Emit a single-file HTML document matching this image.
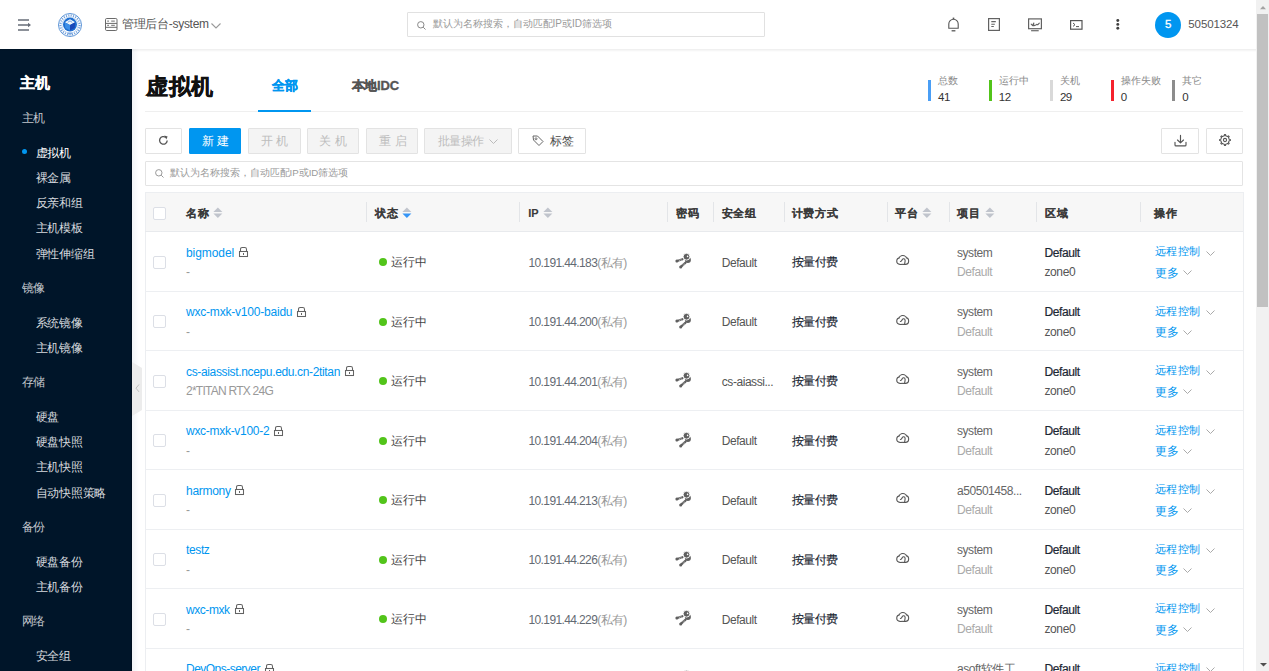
<!DOCTYPE html><html><head><meta charset="utf-8"><style>
*{box-sizing:border-box}
html,body{margin:0;padding:0}
body{width:1269px;height:671px;overflow:hidden;position:relative;background:#fff;font-family:"Liberation Sans",sans-serif}
.t{position:absolute;white-space:nowrap}
.a{position:absolute}
svg{position:absolute;overflow:visible}
.btn{position:absolute;top:128px;height:26px;border:1px solid #e3e3e3;border-radius:1px;background:#f4f4f4}
.cb{position:absolute;width:13px;height:13px;border:1px solid #dcdfe6;border-radius:2px;background:#fff}
.vl{position:absolute;top:202px;width:1px;height:20px;background:#e3e5e8}
.hl{position:absolute;left:145px;width:1098px;height:1px;background:#edeff2}
</style></head><body>
<div class="a" style="left:0;top:0;width:1256px;height:49px;background:#fff"></div>
<svg style="left:18px;top:19px" width="14" height="13" viewBox="0 0 14 13"><g stroke="#676d78" stroke-width="1.6" fill="none"><path d="M0 1h11M0 6h11M0 11h11"/></g><path d="M10 3.8l3 2.2-3 2.2z" fill="#676d78"/></svg>
<svg style="left:58px;top:13px" width="24" height="24" viewBox="0 0 24 24">
<circle cx="12" cy="12" r="11.5" fill="#fff" stroke="#5f97d8" stroke-width="1"/>
<circle cx="12" cy="12" r="9.6" fill="none" stroke="#4a86d2" stroke-width="2" stroke-dasharray="1.1 1.3" opacity="0.8"/>
<circle cx="12" cy="12" r="8.1" fill="#fff" stroke="#9cc0ea" stroke-width="0.6"/>
<circle cx="12" cy="11.6" r="7" fill="#1f6fd0"/>
<path d="M12 6.3L17.2 9.2 12 12.1 6.8 9.2z" fill="#f2f7fd"/>
<path d="M6.8 9.2L12 12.1V17.6L7.3 15z" fill="#3d8fe8"/>
<path d="M17.2 9.2L12 12.1V17.6L16.7 15z" fill="#1b48b8"/>
<path d="M9.8 9.3L12 7.9 14.2 9.3" fill="none" stroke="#4a86d4" stroke-width="0.7"/>
<rect x="9.6" y="19.6" width="4.8" height="1.6" fill="#5a90d6" opacity="0.7"/>
</svg>
<svg style="left:105px;top:18px" width="13" height="13" viewBox="0 0 13 13"><g fill="none" stroke="#6a6a6a" stroke-width="1"><rect x="0.5" y="0.5" width="11.5" height="12" rx="1.2"/><path d="M0.5 5.4h11.5M0.5 9.3h11.5"/></g><g stroke="#8a8a8a" stroke-width="1.1"><path d="M2.2 3.1h1.8M6.2 3.1h3.6M2.2 7.4h1.8M6.2 7.4h3.6"/></g></svg>
<div class="t" style="left:122px;top:18.44px;font-size:12px;line-height:12px;color:#555;font-weight:normal;letter-spacing:-0.3px">管理后台-system</div>
<svg style="left:211px;top:22.5px" width="10" height="6" viewBox="0 0 10 6"><path d="M0.5 0.5l4.5 4.5 4.5-4.5" fill="none" stroke="#9a9a9a" stroke-width="1.1"/></svg>
<div class="a" style="left:407px;top:12px;width:358px;height:25px;border:1px solid #e1e1e1;border-radius:1px"></div>
<svg style="left:417px;top:21px" width="9" height="9" viewBox="0 0 9 9"><circle cx="3.8" cy="3.8" r="3.2" fill="none" stroke="#888" stroke-width="1"/><path d="M6.2 6.2l2.3 2.3" stroke="#888" stroke-width="1"/></svg>
<div class="t" style="left:432.5px;top:19.34px;font-size:10px;line-height:10px;color:#999;font-weight:normal;">默认为名称搜索，自动匹配IP或ID筛选项</div>
<svg style="left:947.5px;top:16.5px" width="11" height="15" viewBox="0 0 11 15"><g fill="none" stroke="#555" stroke-width="1.1"><path d="M0.8 11.3h9.4V7a4.7 4.7 0 0 0-9.4 0z"/></g><rect x="4.7" y="0.6" width="1.6" height="1.6" fill="#555"/><path d="M3.6 13.8h3.8" stroke="#555" stroke-width="1.3"/></svg>
<svg style="left:988px;top:18px" width="13" height="13" viewBox="0 0 13 13"><rect x="0.6" y="0.6" width="10.8" height="11.8" fill="none" stroke="#626262" stroke-width="1.2"/><path d="M3.3 3.6h4.5M3.3 6.2h3.5M3.3 8.5h2.5" stroke="#626262" stroke-width="1.05"/></svg>
<svg style="left:1028px;top:18px" width="15" height="14" viewBox="0 0 15 14"><rect x="0.6" y="0.9" width="12.8" height="9.8" fill="none" stroke="#626262" stroke-width="1.2"/><path d="M3.2 6.2l1.4 1.4 1.2-2.6-0.3 2.8 1.6-0.4 1.6-1 1.2 0.3 1.4-1.6" fill="none" stroke="#626262" stroke-width="1.1" stroke-linejoin="round" stroke-linecap="round"/><path d="M3.1 12.7h7.6" stroke="#6a6a6a" stroke-width="1.2"/></svg>
<svg style="left:1070px;top:20px" width="13" height="10" viewBox="0 0 13 10"><rect x="0.6" y="0.6" width="11.4" height="8.6" fill="none" stroke="#555" stroke-width="1.2"/><path d="M3 3l2 1.7-2 1.7" fill="none" stroke="#555" stroke-width="1"/><path d="M6 6.6h3" stroke="#555" stroke-width="1"/></svg>
<svg style="left:1116px;top:19px" width="4" height="11" viewBox="0 0 4 11"><g fill="#3f3f3f"><circle cx="1.8" cy="1.5" r="1.45"/><circle cx="1.8" cy="5.4" r="1.45"/><circle cx="1.8" cy="9.3" r="1.45"/></g></svg>
<div class="a" style="left:1154.5px;top:11.7px;width:26.5px;height:26.5px;border-radius:50%;background:#0096f0"></div>
<div class="t" style="left:1165px;top:18.87px;font-size:11.5px;line-height:11.5px;color:#fff;font-weight:normal;-webkit-text-stroke:0.3px #fff">5</div>
<div class="t" style="left:1188.3px;top:18.57px;font-size:11.5px;line-height:11.5px;color:#555;font-weight:normal;letter-spacing:-0.1px">50501324</div>
<div class="a" style="left:0;top:49px;width:132px;height:622px;background:#001529"></div>
<div class="a" style="left:131px;top:49px;width:1px;height:622px;background:#000f20"></div>
<div class="a" style="left:132px;top:49px;width:7px;height:622px;background:linear-gradient(to right,rgba(20,60,110,0.06),rgba(20,60,110,0))"></div>
<div class="t" style="left:19.5px;top:75.10px;font-size:15px;line-height:15px;color:#fff;font-weight:bold;letter-spacing:0.8px;-webkit-text-stroke:0.3px #fff">主机</div>
<div class="t" style="left:21.8px;top:111.74px;font-size:12px;line-height:12px;color:#c3c7cd;font-weight:normal;letter-spacing:-0.4px">主机</div>
<div class="t" style="left:35.5px;top:146.54px;font-size:12px;line-height:12px;color:#fff;font-weight:normal;letter-spacing:-0.25px">虚拟机</div>
<div class="a" style="left:21.8px;top:148.6px;width:5px;height:5px;border-radius:50%;background:#0096f0"></div>
<div class="t" style="left:35.5px;top:171.84px;font-size:12px;line-height:12px;color:#d6d9de;font-weight:normal;letter-spacing:-0.25px">裸金属</div>
<div class="t" style="left:35.5px;top:197.14px;font-size:12px;line-height:12px;color:#d6d9de;font-weight:normal;letter-spacing:-0.25px">反亲和组</div>
<div class="t" style="left:35.5px;top:222.44px;font-size:12px;line-height:12px;color:#d6d9de;font-weight:normal;letter-spacing:-0.25px">主机模板</div>
<div class="t" style="left:35.5px;top:247.74px;font-size:12px;line-height:12px;color:#d6d9de;font-weight:normal;letter-spacing:-0.25px">弹性伸缩组</div>
<div class="t" style="left:21.8px;top:282.04px;font-size:12px;line-height:12px;color:#c3c7cd;font-weight:normal;letter-spacing:-0.4px">镜像</div>
<div class="t" style="left:35.5px;top:316.84px;font-size:12px;line-height:12px;color:#d6d9de;font-weight:normal;letter-spacing:-0.25px">系统镜像</div>
<div class="t" style="left:35.5px;top:342.14px;font-size:12px;line-height:12px;color:#d6d9de;font-weight:normal;letter-spacing:-0.25px">主机镜像</div>
<div class="t" style="left:21.8px;top:375.94px;font-size:12px;line-height:12px;color:#c3c7cd;font-weight:normal;letter-spacing:-0.4px">存储</div>
<div class="t" style="left:35.5px;top:410.74px;font-size:12px;line-height:12px;color:#d6d9de;font-weight:normal;letter-spacing:-0.25px">硬盘</div>
<div class="t" style="left:35.5px;top:436.04px;font-size:12px;line-height:12px;color:#d6d9de;font-weight:normal;letter-spacing:-0.25px">硬盘快照</div>
<div class="t" style="left:35.5px;top:461.34px;font-size:12px;line-height:12px;color:#d6d9de;font-weight:normal;letter-spacing:-0.25px">主机快照</div>
<div class="t" style="left:35.5px;top:486.64px;font-size:12px;line-height:12px;color:#d6d9de;font-weight:normal;letter-spacing:-0.25px">自动快照策略</div>
<div class="t" style="left:21.8px;top:520.94px;font-size:12px;line-height:12px;color:#c3c7cd;font-weight:normal;letter-spacing:-0.4px">备份</div>
<div class="t" style="left:35.5px;top:555.74px;font-size:12px;line-height:12px;color:#d6d9de;font-weight:normal;letter-spacing:-0.25px">硬盘备份</div>
<div class="t" style="left:35.5px;top:581.04px;font-size:12px;line-height:12px;color:#d6d9de;font-weight:normal;letter-spacing:-0.25px">主机备份</div>
<div class="t" style="left:21.8px;top:614.94px;font-size:12px;line-height:12px;color:#c3c7cd;font-weight:normal;letter-spacing:-0.4px">网络</div>
<div class="t" style="left:35.5px;top:649.74px;font-size:12px;line-height:12px;color:#d6d9de;font-weight:normal;letter-spacing:-0.25px">安全组</div>
<svg style="left:132px;top:362px" width="11" height="54" viewBox="0 0 11 54"><path d="M0 0L10 6V48L0 54z" fill="#ececec"/><path d="M7 22.5l-3 3.7 3 3.7" fill="none" stroke="#b9b9b9" stroke-width="0.9"/></svg>
<div class="a" style="left:0;top:49px;width:1256px;height:3px;background:linear-gradient(to bottom,rgba(0,0,0,0.07),rgba(0,0,0,0))"></div>
<div class="t" style="left:146px;top:75.58px;font-size:22px;line-height:22px;color:#111;font-weight:bold;letter-spacing:0.5px;-webkit-text-stroke:0.5px #111">虚拟机</div>
<div class="t" style="left:272px;top:79.20px;font-size:13px;line-height:13px;color:#0096f0;font-weight:bold;-webkit-text-stroke:0.35px #0096f0">全部</div>
<div class="t" style="left:351.5px;top:79.20px;font-size:13px;line-height:13px;color:#555;font-weight:bold;letter-spacing:-0.2px;-webkit-text-stroke:0.35px #555">本地IDC</div>
<div class="a" style="left:145px;top:111px;width:1098px;height:1px;background:#efefef"></div>
<div class="a" style="left:258px;top:109.5px;width:53px;height:2px;background:#0096f0"></div>
<div class="a" style="left:928.3px;top:80px;width:2.7px;height:21.4px;background:#4a9ef5"></div>
<div class="t" style="left:938.0px;top:75.94px;font-size:10px;line-height:10px;color:#8a8a8a;font-weight:normal;">总数</div>
<div class="t" style="left:938.0999999999999px;top:91.57px;font-size:11.5px;line-height:11.5px;color:#333;font-weight:normal;letter-spacing:-0.55px">41</div>
<div class="a" style="left:989px;top:80px;width:2.7px;height:21.4px;background:#52c41a"></div>
<div class="t" style="left:998.7px;top:75.94px;font-size:10px;line-height:10px;color:#8a8a8a;font-weight:normal;">运行中</div>
<div class="t" style="left:998.8px;top:91.57px;font-size:11.5px;line-height:11.5px;color:#333;font-weight:normal;letter-spacing:-0.55px">12</div>
<div class="a" style="left:1050.2px;top:80px;width:2.7px;height:21.4px;background:#d9d9d9"></div>
<div class="t" style="left:1059.9px;top:75.94px;font-size:10px;line-height:10px;color:#8a8a8a;font-weight:normal;">关机</div>
<div class="t" style="left:1060.0px;top:91.57px;font-size:11.5px;line-height:11.5px;color:#333;font-weight:normal;letter-spacing:-0.55px">29</div>
<div class="a" style="left:1111px;top:80px;width:2.7px;height:21.4px;background:#f5222d"></div>
<div class="t" style="left:1120.7px;top:75.94px;font-size:10px;line-height:10px;color:#8a8a8a;font-weight:normal;">操作失败</div>
<div class="t" style="left:1120.8px;top:91.57px;font-size:11.5px;line-height:11.5px;color:#333;font-weight:normal;letter-spacing:-0.55px">0</div>
<div class="a" style="left:1172.4px;top:80px;width:2.7px;height:21.4px;background:#8c8c8c"></div>
<div class="t" style="left:1182.1000000000001px;top:75.94px;font-size:10px;line-height:10px;color:#8a8a8a;font-weight:normal;">其它</div>
<div class="t" style="left:1182.2px;top:91.57px;font-size:11.5px;line-height:11.5px;color:#333;font-weight:normal;letter-spacing:-0.55px">0</div>
<div class="btn" style="left:145px;width:37px;background:#fff"></div>
<svg style="left:158px;top:135px" width="11" height="11" viewBox="0 0 11 11"><path d="M9.2 5.5A3.8 3.8 0 1 1 7.8 2.4" fill="none" stroke="#555" stroke-width="1.3"/><path d="M6.3 0.6L9.6 1.4 8.3 4.4z" fill="#555"/></svg>
<div class="btn" style="left:189px;width:52px;background:#0096f0;border-color:#0096f0"></div>
<div class="t" style="left:201.5px;top:135.34px;font-size:12px;line-height:12px;color:#fff;font-weight:normal;letter-spacing:3.6px">新建</div>
<div class="btn" style="left:247.5px;width:53px"></div>
<div class="t" style="left:260.5px;top:135.34px;font-size:12px;line-height:12px;color:#bdbdbd;font-weight:normal;letter-spacing:3.6px">开机</div>
<div class="btn" style="left:307px;width:52px"></div>
<div class="t" style="left:319px;top:135.34px;font-size:12px;line-height:12px;color:#bdbdbd;font-weight:normal;letter-spacing:3.6px">关机</div>
<div class="btn" style="left:366px;width:52px"></div>
<div class="t" style="left:379px;top:135.34px;font-size:12px;line-height:12px;color:#bdbdbd;font-weight:normal;letter-spacing:3.6px">重启</div>
<div class="btn" style="left:424.3px;width:87.5px"></div>
<div class="t" style="left:438px;top:135.34px;font-size:12px;line-height:12px;color:#bdbdbd;font-weight:normal;letter-spacing:-0.6px">批量操作</div>
<svg style="left:489px;top:138.5px" width="9" height="5" viewBox="0 0 9 5"><path d="M0.5 0.5l4 4 4-4" fill="none" stroke="#bbb" stroke-width="1"/></svg>
<div class="btn" style="left:518.2px;width:67.5px;background:#fff"></div>
<svg style="left:532px;top:135px" width="12" height="11" viewBox="0 0 12 11"><path d="M1 1h4.5l5.5 5.5-4 4L1.5 5z" fill="none" stroke="#666" stroke-width="1" stroke-linejoin="round"/><circle cx="4" cy="3.8" r="1" fill="none" stroke="#666" stroke-width="0.9"/></svg>
<div class="t" style="left:549.5px;top:135.34px;font-size:12px;line-height:12px;color:#4a4a4a;font-weight:normal;letter-spacing:0.5px">标签</div>
<div class="btn" style="left:1161px;width:38px;background:#fff"></div>
<svg style="left:1174px;top:134.5px" width="12" height="12" viewBox="0 0 12 12"><g fill="none" stroke="#555" stroke-width="1.15" stroke-linejoin="round" stroke-linecap="round"><path d="M6.5 0.4v7.3M3.5 5L6.5 7.8 9.5 5"/><path d="M1 7.3v2.6a1 1 0 0 0 1 1h9a1 1 0 0 0 1-1V7.3"/></g></svg>
<div class="btn" style="left:1205.5px;width:37.5px;background:#fff"></div>
<svg style="left:1218.5px;top:134.3px" width="12" height="12" viewBox="0 0 12 12"><path d="M9.97 4.64 L10.15 5.34 L11.37 5.41 L11.37 6.59 L10.15 6.66 L9.97 7.36 L9.77 7.85 L9.40 8.47 L10.21 9.38 L9.38 10.21 L8.47 9.40 L7.85 9.77 L7.36 9.97 L6.66 10.15 L6.59 11.37 L5.41 11.37 L5.34 10.15 L4.64 9.97 L4.15 9.77 L3.53 9.40 L2.62 10.21 L1.79 9.38 L2.60 8.47 L2.23 7.85 L2.03 7.36 L1.85 6.66 L0.63 6.59 L0.63 5.41 L1.85 5.34 L2.03 4.64 L2.23 4.15 L2.60 3.53 L1.79 2.62 L2.62 1.79 L3.53 2.60 L4.15 2.23 L4.64 2.03 L5.34 1.85 L5.41 0.63 L6.59 0.63 L6.66 1.85 L7.36 2.03 L7.85 2.23 L8.47 2.60 L9.38 1.79 L10.21 2.62 L9.40 3.53 L9.77 4.15z" fill="none" stroke="#555" stroke-width="1.05" stroke-linejoin="round"/><circle cx="6" cy="6" r="1.6" fill="none" stroke="#555" stroke-width="1.1"/></svg>
<div class="a" style="left:145px;top:161px;width:1098px;height:24.5px;border:1px solid #e4e4e4;border-radius:1px"></div>
<svg style="left:154.5px;top:169px" width="9" height="9" viewBox="0 0 9 9"><circle cx="3.8" cy="3.8" r="3.2" fill="none" stroke="#999" stroke-width="1"/><path d="M6.2 6.2l2.3 2.3" stroke="#999" stroke-width="1"/></svg>
<div class="t" style="left:169.5px;top:168.29px;font-size:9.7px;line-height:9.7px;color:#9a9a9a;font-weight:normal;">默认为名称搜索，自动匹配IP或ID筛选项</div>
<div class="a" style="left:144.5px;top:192px;width:1099px;height:479px;border:1px solid #eceef1;border-bottom:none"></div>
<div class="a" style="left:145.5px;top:193px;width:1097px;height:38px;background:#f7f7f7"></div>
<div class="a" style="left:145px;top:231px;width:1098px;height:1px;background:#e8eaed"></div>
<div class="cb" style="left:153px;top:207px"></div>
<div class="t" style="left:186.3px;top:208.29px;font-size:11px;line-height:11px;color:#3a3a3a;font-weight:bold;letter-spacing:0.55px;-webkit-text-stroke:0.1px #3a3a3a">名称</div>
<svg style="left:213.4px;top:206.5px" width="10" height="12" viewBox="0 0 10 12"><path d="M0.4 4.9L4.9 0.4 9.4 4.9z" fill="#c0c4cc"/><path d="M0.4 6.6L4.9 11.1 9.4 6.6z" fill="#c0c4cc"/></svg>
<div class="t" style="left:375.3px;top:208.29px;font-size:11px;line-height:11px;color:#3a3a3a;font-weight:bold;letter-spacing:0.55px;-webkit-text-stroke:0.1px #3a3a3a">状态</div>
<svg style="left:402.4px;top:206.5px" width="10" height="12" viewBox="0 0 10 12"><path d="M0.4 4.9L4.9 0.4 9.4 4.9z" fill="#c0c4cc"/><path d="M0.4 6.6L4.9 11.1 9.4 6.6z" fill="#3595f6"/></svg>
<div class="t" style="left:528.3px;top:208.29px;font-size:11px;line-height:11px;color:#3a3a3a;font-weight:bold;-webkit-text-stroke:0.1px #3a3a3a">IP</div>
<svg style="left:543.4px;top:206.5px" width="10" height="12" viewBox="0 0 10 12"><path d="M0.4 4.9L4.9 0.4 9.4 4.9z" fill="#c0c4cc"/><path d="M0.4 6.6L4.9 11.1 9.4 6.6z" fill="#c0c4cc"/></svg>
<div class="t" style="left:676.3px;top:208.29px;font-size:11px;line-height:11px;color:#3a3a3a;font-weight:bold;letter-spacing:0.55px;-webkit-text-stroke:0.1px #3a3a3a">密码</div>
<div class="t" style="left:721.6999999999999px;top:208.29px;font-size:11px;line-height:11px;color:#3a3a3a;font-weight:bold;letter-spacing:0.55px;-webkit-text-stroke:0.1px #3a3a3a">安全组</div>
<div class="t" style="left:791.9px;top:208.29px;font-size:11px;line-height:11px;color:#3a3a3a;font-weight:bold;letter-spacing:0.55px;-webkit-text-stroke:0.1px #3a3a3a">计费方式</div>
<div class="t" style="left:895.0999999999999px;top:208.29px;font-size:11px;line-height:11px;color:#3a3a3a;font-weight:bold;letter-spacing:0.55px;-webkit-text-stroke:0.1px #3a3a3a">平台</div>
<svg style="left:922.4px;top:206.5px" width="10" height="12" viewBox="0 0 10 12"><path d="M0.4 4.9L4.9 0.4 9.4 4.9z" fill="#c0c4cc"/><path d="M0.4 6.6L4.9 11.1 9.4 6.6z" fill="#c0c4cc"/></svg>
<div class="t" style="left:957.0px;top:208.29px;font-size:11px;line-height:11px;color:#3a3a3a;font-weight:bold;letter-spacing:0.55px;-webkit-text-stroke:0.1px #3a3a3a">项目</div>
<svg style="left:984.6999999999999px;top:206.5px" width="10" height="12" viewBox="0 0 10 12"><path d="M0.4 4.9L4.9 0.4 9.4 4.9z" fill="#c0c4cc"/><path d="M0.4 6.6L4.9 11.1 9.4 6.6z" fill="#c0c4cc"/></svg>
<div class="t" style="left:1045.1px;top:208.29px;font-size:11px;line-height:11px;color:#3a3a3a;font-weight:bold;letter-spacing:0.55px;-webkit-text-stroke:0.1px #3a3a3a">区域</div>
<div class="t" style="left:1154.3px;top:208.29px;font-size:11px;line-height:11px;color:#3a3a3a;font-weight:bold;letter-spacing:0.55px;-webkit-text-stroke:0.1px #3a3a3a">操作</div>
<div class="vl" style="left:366.4px"></div>
<div class="vl" style="left:519.4px"></div>
<div class="vl" style="left:667.3px"></div>
<div class="vl" style="left:713px"></div>
<div class="vl" style="left:783.5px"></div>
<div class="vl" style="left:886.5px"></div>
<div class="vl" style="left:948.5px"></div>
<div class="vl" style="left:1035.6px"></div>
<div class="vl" style="left:1139.7px"></div>
<div class="cb" style="left:153px;top:255.5px"></div>
<div class="t" style="left:186px;top:246.84px;font-size:12px;line-height:12px;color:#0096f0;font-weight:normal;letter-spacing:-0.071px">bigmodel</div>
<svg style="left:239px;top:246px" width="10" height="11" viewBox="0 0 10 11"><g fill="none" stroke="#636363" stroke-width="1.05"><path d="M1.5 5.5V3.2Q1.5 1.5 3.2 1.5H5.8Q7.5 1.5 7.5 3.2V5.5"/><rect x="0.5" y="5.5" width="8" height="5"/></g><path d="M4.5 7v2" stroke="#636363" stroke-width="1"/></svg>
<div class="t" style="left:186px;top:266.44px;font-size:12px;line-height:12px;color:#999;font-weight:normal;letter-spacing:-0.75px">-</div>
<div class="a" style="left:379px;top:258.0px;width:8px;height:8px;border-radius:50%;background:#52c41a"></div>
<div class="t" style="left:391.3px;top:257.27px;font-size:11.5px;line-height:11.5px;color:#444;font-weight:normal;">运行中</div>
<div class="t" style="left:528.5px;top:256.84px;font-size:12px;line-height:12px;letter-spacing:-0.62px"><span style="color:#646a73">10.191.44.183</span><span style="color:#999">(私有)</span></div>
<svg style="left:670px;top:248.0px" width="30" height="24" viewBox="0 0 30 24"><g stroke="#606060" stroke-linecap="round" fill="none"><path d="M12.6 11.2L7 13.1" stroke-width="2.1"/><path d="M15.6 14.6L10.8 18.9" stroke-width="2.1"/></g><g fill="#606060"><circle cx="17.9" cy="11.9" r="3"/><circle cx="6.9" cy="13.1" r="1.5"/><circle cx="10.7" cy="19" r="1.5"/></g><circle cx="16.5" cy="8.7" r="3.4" fill="#606060" stroke="#fff" stroke-width="0.9"/><g stroke="#fff" stroke-width="0.45"><path d="M9.3 11.6l0.6 1.7M10.8 11.1l0.6 1.7M12.6 16.4l1.3 1.1M13.7 15.5l1.3 1.1"/></g><circle cx="17.6" cy="8.4" r="0.8" fill="#fff"/></svg>
<div class="t" style="left:721.8px;top:256.84px;font-size:12px;line-height:12px;color:#555;font-weight:normal;letter-spacing:-0.45px">Default</div>
<div class="t" style="left:792px;top:256.04px;font-size:12px;line-height:12px;color:#1c2733;font-weight:normal;letter-spacing:-0.6px;-webkit-text-stroke:0.15px #1c2733">按量付费</div>
<svg style="left:892px;top:250.0px" width="22" height="20" viewBox="0 0 22 20"><g fill="#555"><circle cx="8" cy="11.1" r="3.8"/><circle cx="10.8" cy="9.2" r="4.3"/><circle cx="13.3" cy="11" r="3.9"/><rect x="8" y="9.9" width="5.3" height="5"/></g><g fill="#fff"><circle cx="8" cy="11.1" r="2.7"/><circle cx="10.8" cy="9.2" r="3.2"/><circle cx="13.3" cy="11" r="2.8"/><rect x="8" y="11" width="5.3" height="2.8"/></g><path d="M8.4 11.5C9.6 11.6 9.8 10.6 10.3 9.6 10.9 8.4 12.9 8.4 13.1 10.2 13.2 11.3 12.8 12.6 12.6 14.2" fill="none" stroke="#555" stroke-width="1.1" stroke-linecap="round"/></svg>
<div class="t" style="left:957px;top:246.84px;font-size:12px;line-height:12px;color:#666;font-weight:normal;letter-spacing:-0.45px">system</div>
<div class="t" style="left:957px;top:266.44px;font-size:12px;line-height:12px;color:#aaa;font-weight:normal;letter-spacing:-0.4px">Default</div>
<div class="t" style="left:1044.5px;top:246.84px;font-size:12px;line-height:12px;color:#1c2733;font-weight:normal;letter-spacing:-0.4px;-webkit-text-stroke:0.2px #1c2733">Default</div>
<div class="t" style="left:1044.5px;top:266.44px;font-size:12px;line-height:12px;color:#555;font-weight:normal;letter-spacing:-0.4px">zone0</div>
<div class="t" style="left:1154.5px;top:246.49px;font-size:11px;line-height:11px;color:#0096f0;font-weight:normal;letter-spacing:0.5px">远程控制</div>
<svg style="left:1206px;top:250.5px" width="9" height="5" viewBox="0 0 9 5"><path d="M0.5 0.5l4 4 4-4" fill="none" stroke="#aaa" stroke-width="1"/></svg>
<div class="t" style="left:1154.5px;top:266.64px;font-size:12px;line-height:12px;color:#0096f0;font-weight:normal;">更多</div>
<svg style="left:1183px;top:270.2px" width="9" height="5" viewBox="0 0 9 5"><path d="M0.5 0.5l4 4 4-4" fill="none" stroke="#aaa" stroke-width="1"/></svg>
<div class="hl" style="top:290.5px"></div>
<div class="cb" style="left:153px;top:315.0px"></div>
<div class="t" style="left:186px;top:306.34px;font-size:12px;line-height:12px;color:#0096f0;font-weight:normal;letter-spacing:-0.206px">wxc-mxk-v100-baidu</div>
<svg style="left:297px;top:306px" width="10" height="11" viewBox="0 0 10 11"><g fill="none" stroke="#636363" stroke-width="1.05"><path d="M1.5 5.5V3.2Q1.5 1.5 3.2 1.5H5.8Q7.5 1.5 7.5 3.2V5.5"/><rect x="0.5" y="5.5" width="8" height="5"/></g><path d="M4.5 7v2" stroke="#636363" stroke-width="1"/></svg>
<div class="t" style="left:186px;top:325.94px;font-size:12px;line-height:12px;color:#999;font-weight:normal;letter-spacing:-0.75px">-</div>
<div class="a" style="left:379px;top:317.5px;width:8px;height:8px;border-radius:50%;background:#52c41a"></div>
<div class="t" style="left:391.3px;top:316.77px;font-size:11.5px;line-height:11.5px;color:#444;font-weight:normal;">运行中</div>
<div class="t" style="left:528.5px;top:316.34px;font-size:12px;line-height:12px;letter-spacing:-0.62px"><span style="color:#646a73">10.191.44.200</span><span style="color:#999">(私有)</span></div>
<svg style="left:670px;top:307.5px" width="30" height="24" viewBox="0 0 30 24"><g stroke="#606060" stroke-linecap="round" fill="none"><path d="M12.6 11.2L7 13.1" stroke-width="2.1"/><path d="M15.6 14.6L10.8 18.9" stroke-width="2.1"/></g><g fill="#606060"><circle cx="17.9" cy="11.9" r="3"/><circle cx="6.9" cy="13.1" r="1.5"/><circle cx="10.7" cy="19" r="1.5"/></g><circle cx="16.5" cy="8.7" r="3.4" fill="#606060" stroke="#fff" stroke-width="0.9"/><g stroke="#fff" stroke-width="0.45"><path d="M9.3 11.6l0.6 1.7M10.8 11.1l0.6 1.7M12.6 16.4l1.3 1.1M13.7 15.5l1.3 1.1"/></g><circle cx="17.6" cy="8.4" r="0.8" fill="#fff"/></svg>
<div class="t" style="left:721.8px;top:316.34px;font-size:12px;line-height:12px;color:#555;font-weight:normal;letter-spacing:-0.45px">Default</div>
<div class="t" style="left:792px;top:315.54px;font-size:12px;line-height:12px;color:#1c2733;font-weight:normal;letter-spacing:-0.6px;-webkit-text-stroke:0.15px #1c2733">按量付费</div>
<svg style="left:892px;top:310.0px" width="22" height="20" viewBox="0 0 22 20"><g fill="#555"><circle cx="8" cy="11.1" r="3.8"/><circle cx="10.8" cy="9.2" r="4.3"/><circle cx="13.3" cy="11" r="3.9"/><rect x="8" y="9.9" width="5.3" height="5"/></g><g fill="#fff"><circle cx="8" cy="11.1" r="2.7"/><circle cx="10.8" cy="9.2" r="3.2"/><circle cx="13.3" cy="11" r="2.8"/><rect x="8" y="11" width="5.3" height="2.8"/></g><path d="M8.4 11.5C9.6 11.6 9.8 10.6 10.3 9.6 10.9 8.4 12.9 8.4 13.1 10.2 13.2 11.3 12.8 12.6 12.6 14.2" fill="none" stroke="#555" stroke-width="1.1" stroke-linecap="round"/></svg>
<div class="t" style="left:957px;top:306.34px;font-size:12px;line-height:12px;color:#666;font-weight:normal;letter-spacing:-0.45px">system</div>
<div class="t" style="left:957px;top:325.94px;font-size:12px;line-height:12px;color:#aaa;font-weight:normal;letter-spacing:-0.4px">Default</div>
<div class="t" style="left:1044.5px;top:306.34px;font-size:12px;line-height:12px;color:#1c2733;font-weight:normal;letter-spacing:-0.4px;-webkit-text-stroke:0.2px #1c2733">Default</div>
<div class="t" style="left:1044.5px;top:325.94px;font-size:12px;line-height:12px;color:#555;font-weight:normal;letter-spacing:-0.4px">zone0</div>
<div class="t" style="left:1154.5px;top:305.99px;font-size:11px;line-height:11px;color:#0096f0;font-weight:normal;letter-spacing:0.5px">远程控制</div>
<svg style="left:1206px;top:310.0px" width="9" height="5" viewBox="0 0 9 5"><path d="M0.5 0.5l4 4 4-4" fill="none" stroke="#aaa" stroke-width="1"/></svg>
<div class="t" style="left:1154.5px;top:326.14px;font-size:12px;line-height:12px;color:#0096f0;font-weight:normal;">更多</div>
<svg style="left:1183px;top:329.7px" width="9" height="5" viewBox="0 0 9 5"><path d="M0.5 0.5l4 4 4-4" fill="none" stroke="#aaa" stroke-width="1"/></svg>
<div class="hl" style="top:350.0px"></div>
<div class="cb" style="left:153px;top:374.5px"></div>
<div class="t" style="left:186px;top:365.84px;font-size:12px;line-height:12px;color:#0096f0;font-weight:normal;letter-spacing:-0.347px">cs-aiassist.ncepu.edu.cn-2titan</div>
<svg style="left:345px;top:365px" width="10" height="11" viewBox="0 0 10 11"><g fill="none" stroke="#636363" stroke-width="1.05"><path d="M1.5 5.5V3.2Q1.5 1.5 3.2 1.5H5.8Q7.5 1.5 7.5 3.2V5.5"/><rect x="0.5" y="5.5" width="8" height="5"/></g><path d="M4.5 7v2" stroke="#636363" stroke-width="1"/></svg>
<div class="t" style="left:186px;top:385.44px;font-size:12px;line-height:12px;color:#999;font-weight:normal;letter-spacing:-0.75px">2*TITAN RTX 24G</div>
<div class="a" style="left:379px;top:377.0px;width:8px;height:8px;border-radius:50%;background:#52c41a"></div>
<div class="t" style="left:391.3px;top:376.27px;font-size:11.5px;line-height:11.5px;color:#444;font-weight:normal;">运行中</div>
<div class="t" style="left:528.5px;top:375.84px;font-size:12px;line-height:12px;letter-spacing:-0.62px"><span style="color:#646a73">10.191.44.201</span><span style="color:#999">(私有)</span></div>
<svg style="left:670px;top:367.0px" width="30" height="24" viewBox="0 0 30 24"><g stroke="#606060" stroke-linecap="round" fill="none"><path d="M12.6 11.2L7 13.1" stroke-width="2.1"/><path d="M15.6 14.6L10.8 18.9" stroke-width="2.1"/></g><g fill="#606060"><circle cx="17.9" cy="11.9" r="3"/><circle cx="6.9" cy="13.1" r="1.5"/><circle cx="10.7" cy="19" r="1.5"/></g><circle cx="16.5" cy="8.7" r="3.4" fill="#606060" stroke="#fff" stroke-width="0.9"/><g stroke="#fff" stroke-width="0.45"><path d="M9.3 11.6l0.6 1.7M10.8 11.1l0.6 1.7M12.6 16.4l1.3 1.1M13.7 15.5l1.3 1.1"/></g><circle cx="17.6" cy="8.4" r="0.8" fill="#fff"/></svg>
<div class="t" style="left:721.8px;top:375.84px;font-size:12px;line-height:12px;color:#555;font-weight:normal;letter-spacing:-0.45px">cs-aiassi...</div>
<div class="t" style="left:792px;top:375.04px;font-size:12px;line-height:12px;color:#1c2733;font-weight:normal;letter-spacing:-0.6px;-webkit-text-stroke:0.15px #1c2733">按量付费</div>
<svg style="left:892px;top:369.0px" width="22" height="20" viewBox="0 0 22 20"><g fill="#555"><circle cx="8" cy="11.1" r="3.8"/><circle cx="10.8" cy="9.2" r="4.3"/><circle cx="13.3" cy="11" r="3.9"/><rect x="8" y="9.9" width="5.3" height="5"/></g><g fill="#fff"><circle cx="8" cy="11.1" r="2.7"/><circle cx="10.8" cy="9.2" r="3.2"/><circle cx="13.3" cy="11" r="2.8"/><rect x="8" y="11" width="5.3" height="2.8"/></g><path d="M8.4 11.5C9.6 11.6 9.8 10.6 10.3 9.6 10.9 8.4 12.9 8.4 13.1 10.2 13.2 11.3 12.8 12.6 12.6 14.2" fill="none" stroke="#555" stroke-width="1.1" stroke-linecap="round"/></svg>
<div class="t" style="left:957px;top:365.84px;font-size:12px;line-height:12px;color:#666;font-weight:normal;letter-spacing:-0.45px">system</div>
<div class="t" style="left:957px;top:385.44px;font-size:12px;line-height:12px;color:#aaa;font-weight:normal;letter-spacing:-0.4px">Default</div>
<div class="t" style="left:1044.5px;top:365.84px;font-size:12px;line-height:12px;color:#1c2733;font-weight:normal;letter-spacing:-0.4px;-webkit-text-stroke:0.2px #1c2733">Default</div>
<div class="t" style="left:1044.5px;top:385.44px;font-size:12px;line-height:12px;color:#555;font-weight:normal;letter-spacing:-0.4px">zone0</div>
<div class="t" style="left:1154.5px;top:365.49px;font-size:11px;line-height:11px;color:#0096f0;font-weight:normal;letter-spacing:0.5px">远程控制</div>
<svg style="left:1206px;top:369.5px" width="9" height="5" viewBox="0 0 9 5"><path d="M0.5 0.5l4 4 4-4" fill="none" stroke="#aaa" stroke-width="1"/></svg>
<div class="t" style="left:1154.5px;top:385.64px;font-size:12px;line-height:12px;color:#0096f0;font-weight:normal;">更多</div>
<svg style="left:1183px;top:389.2px" width="9" height="5" viewBox="0 0 9 5"><path d="M0.5 0.5l4 4 4-4" fill="none" stroke="#aaa" stroke-width="1"/></svg>
<div class="hl" style="top:409.5px"></div>
<div class="cb" style="left:153px;top:434.0px"></div>
<div class="t" style="left:186px;top:425.34px;font-size:12px;line-height:12px;color:#0096f0;font-weight:normal;letter-spacing:-0.285px">wxc-mxk-v100-2</div>
<svg style="left:274px;top:425px" width="10" height="11" viewBox="0 0 10 11"><g fill="none" stroke="#636363" stroke-width="1.05"><path d="M1.5 5.5V3.2Q1.5 1.5 3.2 1.5H5.8Q7.5 1.5 7.5 3.2V5.5"/><rect x="0.5" y="5.5" width="8" height="5"/></g><path d="M4.5 7v2" stroke="#636363" stroke-width="1"/></svg>
<div class="t" style="left:186px;top:444.94px;font-size:12px;line-height:12px;color:#999;font-weight:normal;letter-spacing:-0.75px">-</div>
<div class="a" style="left:379px;top:436.5px;width:8px;height:8px;border-radius:50%;background:#52c41a"></div>
<div class="t" style="left:391.3px;top:435.77px;font-size:11.5px;line-height:11.5px;color:#444;font-weight:normal;">运行中</div>
<div class="t" style="left:528.5px;top:435.34px;font-size:12px;line-height:12px;letter-spacing:-0.62px"><span style="color:#646a73">10.191.44.204</span><span style="color:#999">(私有)</span></div>
<svg style="left:670px;top:426.5px" width="30" height="24" viewBox="0 0 30 24"><g stroke="#606060" stroke-linecap="round" fill="none"><path d="M12.6 11.2L7 13.1" stroke-width="2.1"/><path d="M15.6 14.6L10.8 18.9" stroke-width="2.1"/></g><g fill="#606060"><circle cx="17.9" cy="11.9" r="3"/><circle cx="6.9" cy="13.1" r="1.5"/><circle cx="10.7" cy="19" r="1.5"/></g><circle cx="16.5" cy="8.7" r="3.4" fill="#606060" stroke="#fff" stroke-width="0.9"/><g stroke="#fff" stroke-width="0.45"><path d="M9.3 11.6l0.6 1.7M10.8 11.1l0.6 1.7M12.6 16.4l1.3 1.1M13.7 15.5l1.3 1.1"/></g><circle cx="17.6" cy="8.4" r="0.8" fill="#fff"/></svg>
<div class="t" style="left:721.8px;top:435.34px;font-size:12px;line-height:12px;color:#555;font-weight:normal;letter-spacing:-0.45px">Default</div>
<div class="t" style="left:792px;top:434.54px;font-size:12px;line-height:12px;color:#1c2733;font-weight:normal;letter-spacing:-0.6px;-webkit-text-stroke:0.15px #1c2733">按量付费</div>
<svg style="left:892px;top:428.0px" width="22" height="20" viewBox="0 0 22 20"><g fill="#555"><circle cx="8" cy="11.1" r="3.8"/><circle cx="10.8" cy="9.2" r="4.3"/><circle cx="13.3" cy="11" r="3.9"/><rect x="8" y="9.9" width="5.3" height="5"/></g><g fill="#fff"><circle cx="8" cy="11.1" r="2.7"/><circle cx="10.8" cy="9.2" r="3.2"/><circle cx="13.3" cy="11" r="2.8"/><rect x="8" y="11" width="5.3" height="2.8"/></g><path d="M8.4 11.5C9.6 11.6 9.8 10.6 10.3 9.6 10.9 8.4 12.9 8.4 13.1 10.2 13.2 11.3 12.8 12.6 12.6 14.2" fill="none" stroke="#555" stroke-width="1.1" stroke-linecap="round"/></svg>
<div class="t" style="left:957px;top:425.34px;font-size:12px;line-height:12px;color:#666;font-weight:normal;letter-spacing:-0.45px">system</div>
<div class="t" style="left:957px;top:444.94px;font-size:12px;line-height:12px;color:#aaa;font-weight:normal;letter-spacing:-0.4px">Default</div>
<div class="t" style="left:1044.5px;top:425.34px;font-size:12px;line-height:12px;color:#1c2733;font-weight:normal;letter-spacing:-0.4px;-webkit-text-stroke:0.2px #1c2733">Default</div>
<div class="t" style="left:1044.5px;top:444.94px;font-size:12px;line-height:12px;color:#555;font-weight:normal;letter-spacing:-0.4px">zone0</div>
<div class="t" style="left:1154.5px;top:424.99px;font-size:11px;line-height:11px;color:#0096f0;font-weight:normal;letter-spacing:0.5px">远程控制</div>
<svg style="left:1206px;top:429.0px" width="9" height="5" viewBox="0 0 9 5"><path d="M0.5 0.5l4 4 4-4" fill="none" stroke="#aaa" stroke-width="1"/></svg>
<div class="t" style="left:1154.5px;top:445.14px;font-size:12px;line-height:12px;color:#0096f0;font-weight:normal;">更多</div>
<svg style="left:1183px;top:448.7px" width="9" height="5" viewBox="0 0 9 5"><path d="M0.5 0.5l4 4 4-4" fill="none" stroke="#aaa" stroke-width="1"/></svg>
<div class="hl" style="top:469.0px"></div>
<div class="cb" style="left:153px;top:493.5px"></div>
<div class="t" style="left:186px;top:484.84px;font-size:12px;line-height:12px;color:#0096f0;font-weight:normal;letter-spacing:-0.283px">harmony</div>
<svg style="left:235px;top:484px" width="10" height="11" viewBox="0 0 10 11"><g fill="none" stroke="#636363" stroke-width="1.05"><path d="M1.5 5.5V3.2Q1.5 1.5 3.2 1.5H5.8Q7.5 1.5 7.5 3.2V5.5"/><rect x="0.5" y="5.5" width="8" height="5"/></g><path d="M4.5 7v2" stroke="#636363" stroke-width="1"/></svg>
<div class="t" style="left:186px;top:504.44px;font-size:12px;line-height:12px;color:#999;font-weight:normal;letter-spacing:-0.75px">-</div>
<div class="a" style="left:379px;top:496.0px;width:8px;height:8px;border-radius:50%;background:#52c41a"></div>
<div class="t" style="left:391.3px;top:495.27px;font-size:11.5px;line-height:11.5px;color:#444;font-weight:normal;">运行中</div>
<div class="t" style="left:528.5px;top:494.84px;font-size:12px;line-height:12px;letter-spacing:-0.62px"><span style="color:#646a73">10.191.44.213</span><span style="color:#999">(私有)</span></div>
<svg style="left:670px;top:486.0px" width="30" height="24" viewBox="0 0 30 24"><g stroke="#606060" stroke-linecap="round" fill="none"><path d="M12.6 11.2L7 13.1" stroke-width="2.1"/><path d="M15.6 14.6L10.8 18.9" stroke-width="2.1"/></g><g fill="#606060"><circle cx="17.9" cy="11.9" r="3"/><circle cx="6.9" cy="13.1" r="1.5"/><circle cx="10.7" cy="19" r="1.5"/></g><circle cx="16.5" cy="8.7" r="3.4" fill="#606060" stroke="#fff" stroke-width="0.9"/><g stroke="#fff" stroke-width="0.45"><path d="M9.3 11.6l0.6 1.7M10.8 11.1l0.6 1.7M12.6 16.4l1.3 1.1M13.7 15.5l1.3 1.1"/></g><circle cx="17.6" cy="8.4" r="0.8" fill="#fff"/></svg>
<div class="t" style="left:721.8px;top:494.84px;font-size:12px;line-height:12px;color:#555;font-weight:normal;letter-spacing:-0.45px">Default</div>
<div class="t" style="left:792px;top:494.04px;font-size:12px;line-height:12px;color:#1c2733;font-weight:normal;letter-spacing:-0.6px;-webkit-text-stroke:0.15px #1c2733">按量付费</div>
<svg style="left:892px;top:488.0px" width="22" height="20" viewBox="0 0 22 20"><g fill="#555"><circle cx="8" cy="11.1" r="3.8"/><circle cx="10.8" cy="9.2" r="4.3"/><circle cx="13.3" cy="11" r="3.9"/><rect x="8" y="9.9" width="5.3" height="5"/></g><g fill="#fff"><circle cx="8" cy="11.1" r="2.7"/><circle cx="10.8" cy="9.2" r="3.2"/><circle cx="13.3" cy="11" r="2.8"/><rect x="8" y="11" width="5.3" height="2.8"/></g><path d="M8.4 11.5C9.6 11.6 9.8 10.6 10.3 9.6 10.9 8.4 12.9 8.4 13.1 10.2 13.2 11.3 12.8 12.6 12.6 14.2" fill="none" stroke="#555" stroke-width="1.1" stroke-linecap="round"/></svg>
<div class="t" style="left:957px;top:484.84px;font-size:12px;line-height:12px;color:#666;font-weight:normal;letter-spacing:-0.45px">a50501458...</div>
<div class="t" style="left:957px;top:504.44px;font-size:12px;line-height:12px;color:#aaa;font-weight:normal;letter-spacing:-0.4px">Default</div>
<div class="t" style="left:1044.5px;top:484.84px;font-size:12px;line-height:12px;color:#1c2733;font-weight:normal;letter-spacing:-0.4px;-webkit-text-stroke:0.2px #1c2733">Default</div>
<div class="t" style="left:1044.5px;top:504.44px;font-size:12px;line-height:12px;color:#555;font-weight:normal;letter-spacing:-0.4px">zone0</div>
<div class="t" style="left:1154.5px;top:484.49px;font-size:11px;line-height:11px;color:#0096f0;font-weight:normal;letter-spacing:0.5px">远程控制</div>
<svg style="left:1206px;top:488.5px" width="9" height="5" viewBox="0 0 9 5"><path d="M0.5 0.5l4 4 4-4" fill="none" stroke="#aaa" stroke-width="1"/></svg>
<div class="t" style="left:1154.5px;top:504.64px;font-size:12px;line-height:12px;color:#0096f0;font-weight:normal;">更多</div>
<svg style="left:1183px;top:508.2px" width="9" height="5" viewBox="0 0 9 5"><path d="M0.5 0.5l4 4 4-4" fill="none" stroke="#aaa" stroke-width="1"/></svg>
<div class="hl" style="top:528.5px"></div>
<div class="cb" style="left:153px;top:553.0px"></div>
<div class="t" style="left:186px;top:544.34px;font-size:12px;line-height:12px;color:#0096f0;font-weight:normal;letter-spacing:-0.375px">testz</div>
<div class="t" style="left:186px;top:563.94px;font-size:12px;line-height:12px;color:#999;font-weight:normal;letter-spacing:-0.75px">-</div>
<div class="a" style="left:379px;top:555.5px;width:8px;height:8px;border-radius:50%;background:#52c41a"></div>
<div class="t" style="left:391.3px;top:554.77px;font-size:11.5px;line-height:11.5px;color:#444;font-weight:normal;">运行中</div>
<div class="t" style="left:528.5px;top:554.34px;font-size:12px;line-height:12px;letter-spacing:-0.62px"><span style="color:#646a73">10.191.44.226</span><span style="color:#999">(私有)</span></div>
<svg style="left:670px;top:545.5px" width="30" height="24" viewBox="0 0 30 24"><g stroke="#606060" stroke-linecap="round" fill="none"><path d="M12.6 11.2L7 13.1" stroke-width="2.1"/><path d="M15.6 14.6L10.8 18.9" stroke-width="2.1"/></g><g fill="#606060"><circle cx="17.9" cy="11.9" r="3"/><circle cx="6.9" cy="13.1" r="1.5"/><circle cx="10.7" cy="19" r="1.5"/></g><circle cx="16.5" cy="8.7" r="3.4" fill="#606060" stroke="#fff" stroke-width="0.9"/><g stroke="#fff" stroke-width="0.45"><path d="M9.3 11.6l0.6 1.7M10.8 11.1l0.6 1.7M12.6 16.4l1.3 1.1M13.7 15.5l1.3 1.1"/></g><circle cx="17.6" cy="8.4" r="0.8" fill="#fff"/></svg>
<div class="t" style="left:721.8px;top:554.34px;font-size:12px;line-height:12px;color:#555;font-weight:normal;letter-spacing:-0.45px">Default</div>
<div class="t" style="left:792px;top:553.54px;font-size:12px;line-height:12px;color:#1c2733;font-weight:normal;letter-spacing:-0.6px;-webkit-text-stroke:0.15px #1c2733">按量付费</div>
<svg style="left:892px;top:548.0px" width="22" height="20" viewBox="0 0 22 20"><g fill="#555"><circle cx="8" cy="11.1" r="3.8"/><circle cx="10.8" cy="9.2" r="4.3"/><circle cx="13.3" cy="11" r="3.9"/><rect x="8" y="9.9" width="5.3" height="5"/></g><g fill="#fff"><circle cx="8" cy="11.1" r="2.7"/><circle cx="10.8" cy="9.2" r="3.2"/><circle cx="13.3" cy="11" r="2.8"/><rect x="8" y="11" width="5.3" height="2.8"/></g><path d="M8.4 11.5C9.6 11.6 9.8 10.6 10.3 9.6 10.9 8.4 12.9 8.4 13.1 10.2 13.2 11.3 12.8 12.6 12.6 14.2" fill="none" stroke="#555" stroke-width="1.1" stroke-linecap="round"/></svg>
<div class="t" style="left:957px;top:544.34px;font-size:12px;line-height:12px;color:#666;font-weight:normal;letter-spacing:-0.45px">system</div>
<div class="t" style="left:957px;top:563.94px;font-size:12px;line-height:12px;color:#aaa;font-weight:normal;letter-spacing:-0.4px">Default</div>
<div class="t" style="left:1044.5px;top:544.34px;font-size:12px;line-height:12px;color:#1c2733;font-weight:normal;letter-spacing:-0.4px;-webkit-text-stroke:0.2px #1c2733">Default</div>
<div class="t" style="left:1044.5px;top:563.94px;font-size:12px;line-height:12px;color:#555;font-weight:normal;letter-spacing:-0.4px">zone0</div>
<div class="t" style="left:1154.5px;top:543.99px;font-size:11px;line-height:11px;color:#0096f0;font-weight:normal;letter-spacing:0.5px">远程控制</div>
<svg style="left:1206px;top:548.0px" width="9" height="5" viewBox="0 0 9 5"><path d="M0.5 0.5l4 4 4-4" fill="none" stroke="#aaa" stroke-width="1"/></svg>
<div class="t" style="left:1154.5px;top:564.14px;font-size:12px;line-height:12px;color:#0096f0;font-weight:normal;">更多</div>
<svg style="left:1183px;top:567.7px" width="9" height="5" viewBox="0 0 9 5"><path d="M0.5 0.5l4 4 4-4" fill="none" stroke="#aaa" stroke-width="1"/></svg>
<div class="hl" style="top:588.0px"></div>
<div class="cb" style="left:153px;top:612.5px"></div>
<div class="t" style="left:186px;top:603.84px;font-size:12px;line-height:12px;color:#0096f0;font-weight:normal;letter-spacing:-0.433px">wxc-mxk</div>
<svg style="left:235px;top:603px" width="10" height="11" viewBox="0 0 10 11"><g fill="none" stroke="#636363" stroke-width="1.05"><path d="M1.5 5.5V3.2Q1.5 1.5 3.2 1.5H5.8Q7.5 1.5 7.5 3.2V5.5"/><rect x="0.5" y="5.5" width="8" height="5"/></g><path d="M4.5 7v2" stroke="#636363" stroke-width="1"/></svg>
<div class="t" style="left:186px;top:623.44px;font-size:12px;line-height:12px;color:#999;font-weight:normal;letter-spacing:-0.75px">-</div>
<div class="a" style="left:379px;top:615.0px;width:8px;height:8px;border-radius:50%;background:#52c41a"></div>
<div class="t" style="left:391.3px;top:614.27px;font-size:11.5px;line-height:11.5px;color:#444;font-weight:normal;">运行中</div>
<div class="t" style="left:528.5px;top:613.84px;font-size:12px;line-height:12px;letter-spacing:-0.62px"><span style="color:#646a73">10.191.44.229</span><span style="color:#999">(私有)</span></div>
<svg style="left:670px;top:605.0px" width="30" height="24" viewBox="0 0 30 24"><g stroke="#606060" stroke-linecap="round" fill="none"><path d="M12.6 11.2L7 13.1" stroke-width="2.1"/><path d="M15.6 14.6L10.8 18.9" stroke-width="2.1"/></g><g fill="#606060"><circle cx="17.9" cy="11.9" r="3"/><circle cx="6.9" cy="13.1" r="1.5"/><circle cx="10.7" cy="19" r="1.5"/></g><circle cx="16.5" cy="8.7" r="3.4" fill="#606060" stroke="#fff" stroke-width="0.9"/><g stroke="#fff" stroke-width="0.45"><path d="M9.3 11.6l0.6 1.7M10.8 11.1l0.6 1.7M12.6 16.4l1.3 1.1M13.7 15.5l1.3 1.1"/></g><circle cx="17.6" cy="8.4" r="0.8" fill="#fff"/></svg>
<div class="t" style="left:721.8px;top:613.84px;font-size:12px;line-height:12px;color:#555;font-weight:normal;letter-spacing:-0.45px">Default</div>
<div class="t" style="left:792px;top:613.04px;font-size:12px;line-height:12px;color:#1c2733;font-weight:normal;letter-spacing:-0.6px;-webkit-text-stroke:0.15px #1c2733">按量付费</div>
<svg style="left:892px;top:607.0px" width="22" height="20" viewBox="0 0 22 20"><g fill="#555"><circle cx="8" cy="11.1" r="3.8"/><circle cx="10.8" cy="9.2" r="4.3"/><circle cx="13.3" cy="11" r="3.9"/><rect x="8" y="9.9" width="5.3" height="5"/></g><g fill="#fff"><circle cx="8" cy="11.1" r="2.7"/><circle cx="10.8" cy="9.2" r="3.2"/><circle cx="13.3" cy="11" r="2.8"/><rect x="8" y="11" width="5.3" height="2.8"/></g><path d="M8.4 11.5C9.6 11.6 9.8 10.6 10.3 9.6 10.9 8.4 12.9 8.4 13.1 10.2 13.2 11.3 12.8 12.6 12.6 14.2" fill="none" stroke="#555" stroke-width="1.1" stroke-linecap="round"/></svg>
<div class="t" style="left:957px;top:603.84px;font-size:12px;line-height:12px;color:#666;font-weight:normal;letter-spacing:-0.45px">system</div>
<div class="t" style="left:957px;top:623.44px;font-size:12px;line-height:12px;color:#aaa;font-weight:normal;letter-spacing:-0.4px">Default</div>
<div class="t" style="left:1044.5px;top:603.84px;font-size:12px;line-height:12px;color:#1c2733;font-weight:normal;letter-spacing:-0.4px;-webkit-text-stroke:0.2px #1c2733">Default</div>
<div class="t" style="left:1044.5px;top:623.44px;font-size:12px;line-height:12px;color:#555;font-weight:normal;letter-spacing:-0.4px">zone0</div>
<div class="t" style="left:1154.5px;top:603.49px;font-size:11px;line-height:11px;color:#0096f0;font-weight:normal;letter-spacing:0.5px">远程控制</div>
<svg style="left:1206px;top:607.5px" width="9" height="5" viewBox="0 0 9 5"><path d="M0.5 0.5l4 4 4-4" fill="none" stroke="#aaa" stroke-width="1"/></svg>
<div class="t" style="left:1154.5px;top:623.64px;font-size:12px;line-height:12px;color:#0096f0;font-weight:normal;">更多</div>
<svg style="left:1183px;top:627.2px" width="9" height="5" viewBox="0 0 9 5"><path d="M0.5 0.5l4 4 4-4" fill="none" stroke="#aaa" stroke-width="1"/></svg>
<div class="hl" style="top:647.5px"></div>
<div class="cb" style="left:153px;top:672.0px"></div>
<div class="t" style="left:186px;top:663.34px;font-size:12px;line-height:12px;color:#0096f0;font-weight:normal;letter-spacing:-0.517px">DevOps-server</div>
<svg style="left:265px;top:663px" width="10" height="11" viewBox="0 0 10 11"><g fill="none" stroke="#636363" stroke-width="1.05"><path d="M1.5 5.5V3.2Q1.5 1.5 3.2 1.5H5.8Q7.5 1.5 7.5 3.2V5.5"/><rect x="0.5" y="5.5" width="8" height="5"/></g><path d="M4.5 7v2" stroke="#636363" stroke-width="1"/></svg>
<div class="t" style="left:186px;top:682.94px;font-size:12px;line-height:12px;color:#999;font-weight:normal;letter-spacing:-0.75px">-</div>
<div class="a" style="left:379px;top:674.5px;width:8px;height:8px;border-radius:50%;background:#52c41a"></div>
<div class="t" style="left:391.3px;top:673.77px;font-size:11.5px;line-height:11.5px;color:#444;font-weight:normal;">运行中</div>
<svg style="left:670px;top:664.5px" width="30" height="24" viewBox="0 0 30 24"><g stroke="#606060" stroke-linecap="round" fill="none"><path d="M12.6 11.2L7 13.1" stroke-width="2.1"/><path d="M15.6 14.6L10.8 18.9" stroke-width="2.1"/></g><g fill="#606060"><circle cx="17.9" cy="11.9" r="3"/><circle cx="6.9" cy="13.1" r="1.5"/><circle cx="10.7" cy="19" r="1.5"/></g><circle cx="16.5" cy="8.7" r="3.4" fill="#606060" stroke="#fff" stroke-width="0.9"/><g stroke="#fff" stroke-width="0.45"><path d="M9.3 11.6l0.6 1.7M10.8 11.1l0.6 1.7M12.6 16.4l1.3 1.1M13.7 15.5l1.3 1.1"/></g><circle cx="17.6" cy="8.4" r="0.8" fill="#fff"/></svg>
<div class="t" style="left:721.8px;top:673.34px;font-size:12px;line-height:12px;color:#555;font-weight:normal;letter-spacing:-0.45px">Default</div>
<div class="t" style="left:792px;top:672.54px;font-size:12px;line-height:12px;color:#1c2733;font-weight:normal;letter-spacing:-0.6px;-webkit-text-stroke:0.15px #1c2733">按量付费</div>
<svg style="left:892px;top:666.0px" width="22" height="20" viewBox="0 0 22 20"><g fill="#555"><circle cx="8" cy="11.1" r="3.8"/><circle cx="10.8" cy="9.2" r="4.3"/><circle cx="13.3" cy="11" r="3.9"/><rect x="8" y="9.9" width="5.3" height="5"/></g><g fill="#fff"><circle cx="8" cy="11.1" r="2.7"/><circle cx="10.8" cy="9.2" r="3.2"/><circle cx="13.3" cy="11" r="2.8"/><rect x="8" y="11" width="5.3" height="2.8"/></g><path d="M8.4 11.5C9.6 11.6 9.8 10.6 10.3 9.6 10.9 8.4 12.9 8.4 13.1 10.2 13.2 11.3 12.8 12.6 12.6 14.2" fill="none" stroke="#555" stroke-width="1.1" stroke-linecap="round"/></svg>
<div class="t" style="left:957px;top:663.34px;font-size:12px;line-height:12px;color:#666;font-weight:normal;letter-spacing:-0.45px">asoft软件工...</div>
<div class="t" style="left:957px;top:682.94px;font-size:12px;line-height:12px;color:#aaa;font-weight:normal;letter-spacing:-0.4px">Default</div>
<div class="t" style="left:1044.5px;top:663.34px;font-size:12px;line-height:12px;color:#1c2733;font-weight:normal;letter-spacing:-0.4px;-webkit-text-stroke:0.2px #1c2733">Default</div>
<div class="t" style="left:1044.5px;top:682.94px;font-size:12px;line-height:12px;color:#555;font-weight:normal;letter-spacing:-0.4px">zone0</div>
<div class="t" style="left:1154.5px;top:662.99px;font-size:11px;line-height:11px;color:#0096f0;font-weight:normal;letter-spacing:0.5px">远程控制</div>
<svg style="left:1206px;top:667.0px" width="9" height="5" viewBox="0 0 9 5"><path d="M0.5 0.5l4 4 4-4" fill="none" stroke="#aaa" stroke-width="1"/></svg>
<div class="t" style="left:1154.5px;top:683.14px;font-size:12px;line-height:12px;color:#0096f0;font-weight:normal;">更多</div>
<svg style="left:1183px;top:686.7px" width="9" height="5" viewBox="0 0 9 5"><path d="M0.5 0.5l4 4 4-4" fill="none" stroke="#aaa" stroke-width="1"/></svg>
<div class="a" style="left:1256px;top:0;width:13px;height:671px;background:#f1f1f1"></div>
<div class="a" style="left:1257px;top:14px;width:11px;height:293px;background:#c1c1c1"></div>
<svg style="left:1259.5px;top:5.8px" width="6" height="4" viewBox="0 0 6 4"><path d="M0 3.2L3 0 6 3.2z" fill="#a3a3a3"/></svg>
<svg style="left:1259.5px;top:662.5px" width="7" height="4" viewBox="0 0 7 4"><path d="M0 0h7L3.5 3.5z" fill="#505050"/></svg>
</body></html>
